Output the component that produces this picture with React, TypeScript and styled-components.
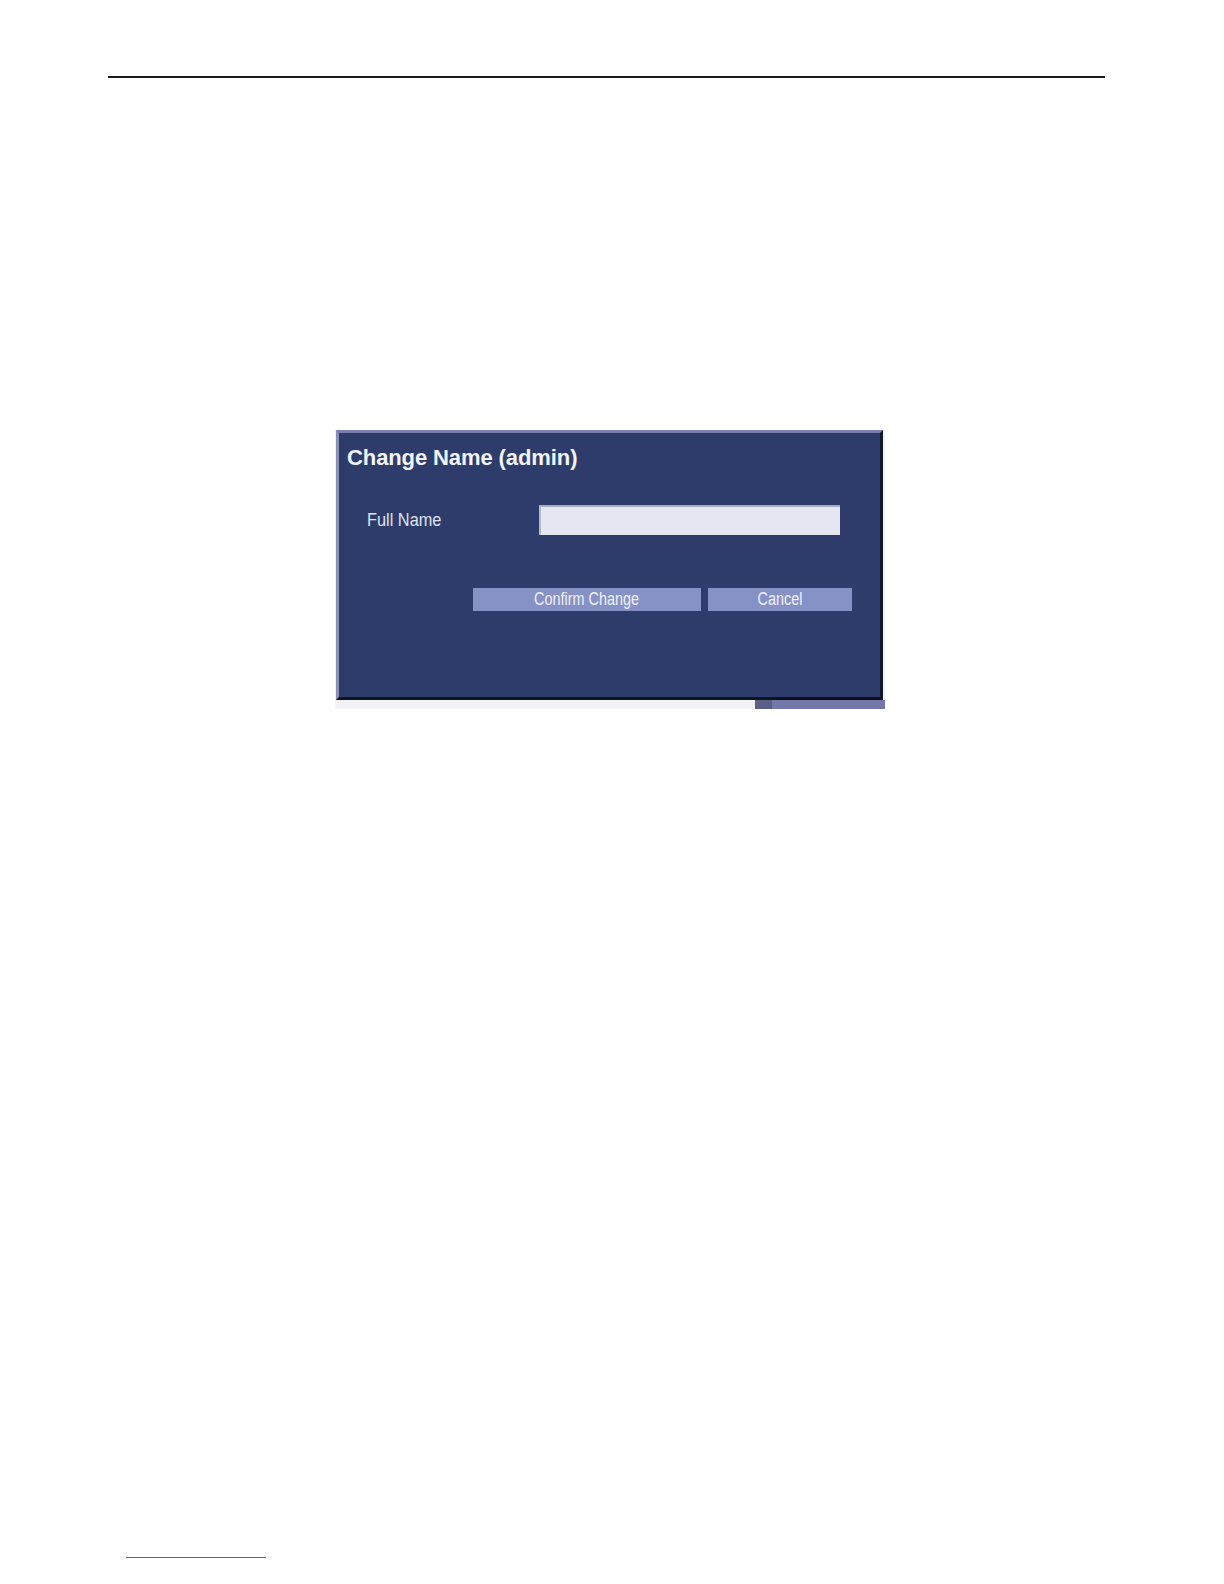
import styled, { createGlobalStyle } from "styled-components";

const GlobalStyle = createGlobalStyle`
  body {
    margin: 0;
    background: #ffffff;
    font-family: "Liberation Sans", Arial, sans-serif;
  }
`;

const Page = styled.div`
  width: 1224px;
  height: 1584px;
  display: flex;
  flex-direction: column;
`;

const HeaderRule = styled.div`
  margin: 76px 0 0 108px;
  width: 997px;
  height: 2px;
  background: #1c1c1c;
`;

const Figure = styled.div`
  margin: 352px 0 0 335px;
  width: 550px;
  height: 279px;
  display: flex;
  flex-direction: column;
  background: #f1f1f6;
`;

const Dialog = styled.div`
  margin-left: 1px;
  width: 547px;
  height: 270px;
  box-sizing: border-box;
  background: #2e3c6b;
  border-top: 3px solid #7b80ad;
  border-left: 3px solid #8c90b2;
  border-right: 3px solid #14172a;
  border-bottom: 3px solid #0f121f;
  padding: 12px 0 0 8px;
  display: flex;
  flex-direction: column;
`;

const Title = styled.h1`
  margin: 0;
  font-size: 22px;
  line-height: 26px;
  font-weight: bold;
  color: #f2f4fa;
  letter-spacing: -0.1px;
`;

const FieldRow = styled.div`
  margin: 34px 0 0 20px;
  display: flex;
  align-items: center;
`;

const Label = styled.span`
  width: 172px;
  font-size: 19px;
  color: #dfe3f0;
  transform: scaleX(0.86);
  transform-origin: left center;
  white-space: nowrap;
`;

const TextInput = styled.input`
  width: 301px;
  height: 30px;
  box-sizing: border-box;
  margin: 0;
  padding: 0 6px;
  background: #e4e7f1;
  border: none;
  border-top: 2px solid #a9adbd;
  border-left: 2px solid #b6b9c6;
  outline: none;
`;

const ButtonRow = styled.div`
  margin: 53px 0 0 126px;
  display: flex;
  gap: 7px;
`;

const Btn = styled.button<{ w: number }>`
  width: ${(p) => p.w}px;
  height: 23px;
  margin: 0;
  padding: 0;
  border: none;
  background: #8691c5;
  color: #eef0f8;
  font-family: "Liberation Sans", Arial, sans-serif;
  font-size: 18px;
  line-height: 23px;
  white-space: nowrap;
  cursor: pointer;
`;

const BtnText = styled.span`
  display: inline-block;
  transform: scaleX(0.8);
`;

const BottomStrip = styled.div`
  flex: 1;
  display: flex;
`;

const StripLight = styled.div`
  width: 420px;
  background: #f1f1f6;
`;

const StripDark = styled.div`
  width: 17px;
  background: #5b5f86;
`;

const StripPurple = styled.div`
  flex: 1;
  background: #7278a8;
`;

const FootRule = styled.div`
  margin: 848px 0 0 126px;
  width: 140px;
  height: 1px;
  background: #4a5fc0;
`;

export default function App() {
  return (
    <>
      <GlobalStyle />
      <Page>
        <HeaderRule />
        <Figure>
          <Dialog>
            <Title>Change Name (admin)</Title>
            <FieldRow>
              <Label>Full Name</Label>
              <TextInput type="text" />
            </FieldRow>
            <ButtonRow>
              <Btn w={228}>
                <BtnText>Confirm Change</BtnText>
              </Btn>
              <Btn w={144}>
                <BtnText>Cancel</BtnText>
              </Btn>
            </ButtonRow>
          </Dialog>
          <BottomStrip>
            <StripLight />
            <StripDark />
            <StripPurple />
          </BottomStrip>
        </Figure>
        <FootRule />
      </Page>
    </>
  );
}
